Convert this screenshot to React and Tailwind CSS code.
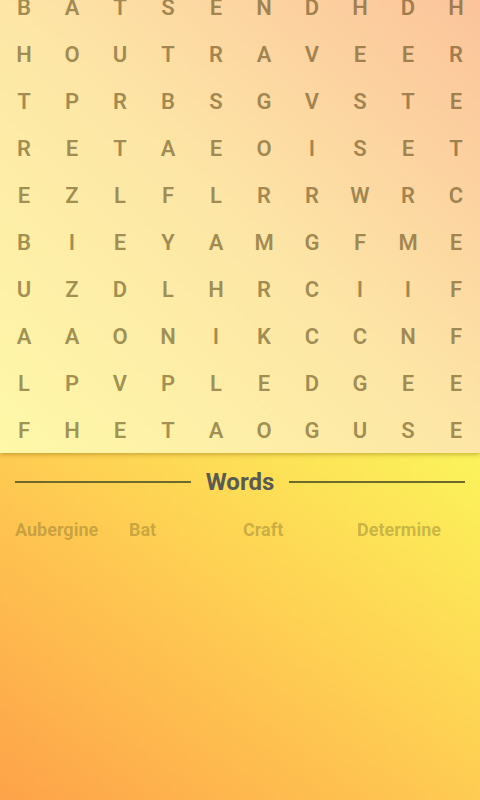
const rows = [
  "BATSENDHDH",
  "HOUTRAVEER",
  "TPRBSGVSTE",
  "RETAEOISET",
  "EZLFLRRWRC",
  "BIEYAMGFME",
  "UZDLHRCIIF",
  "AAONIKCCNF",
  "LPVPLEDGEE",
  "FHETAOGUSE",
];

const words = ["Aubergine", "Bat", "Craft", "Determine"];

export default function App() {
  return (
    <div
      className="flex h-[800px] w-[480px] flex-col overflow-hidden"
      style={{ fontFamily: "Roboto, 'Liberation Sans', sans-serif" }}
    >
      {/* Letter grid */}
      <div className="relative z-10 h-[453px] shrink-0 overflow-hidden bg-gradient-to-tr from-[#fef8a8] via-[#fde6a6] to-[#fbc39b] shadow-[0_2px_4px_rgba(120,90,0,0.35)]">
        <div className="-mt-[16px] grid grid-cols-10">
          {rows.map((row, r) =>
            row.split("").map((ch, c) => (
              <div
                key={r + "-" + c}
                className="flex h-[47px] items-center justify-center text-[22px] font-semibold text-[rgba(70,50,0,0.5)]"
              >
                {ch}
              </div>
            ))
          )}
        </div>
      </div>

      {/* Words panel */}
      <div className="flex-1 bg-gradient-to-tr from-[#fda249] to-[#fbf45b] px-[15px] pt-[15px]">
        <div className="flex items-center gap-[15px]">
          <div className="h-[2px] flex-1 bg-[#6e6a2c]" />
          <h2 className="text-[24px] font-bold leading-7 text-[#5a5a52]">
            Words
          </h2>
          <div className="h-[2px] flex-1 bg-[#6e6a2c]" />
        </div>
        <div className="mt-[22px] grid grid-cols-[repeat(4,114px)]">
          {words.map((w) => (
            <span
              key={w}
              className="text-[18px] font-bold leading-6 text-[rgba(90,80,30,0.33)]"
            >
              {w}
            </span>
          ))}
        </div>
      </div>
    </div>
  );
}
